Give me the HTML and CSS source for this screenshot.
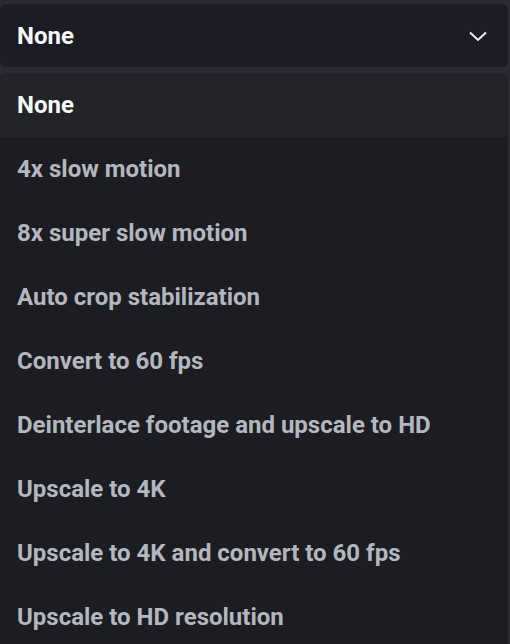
FILE: index.html
```html
<!DOCTYPE html>
<html>
<head>
<meta charset="utf-8">
<link rel="stylesheet" href="styles.css">
</head>
<body>
<div class="wrap">
  <div class="select">
    <span class="value">None</span>
    <svg class="chev" width="18" height="12" viewBox="0 0 18 12"><path d="M1 2.5 L9 10 L17 2.5" fill="none" stroke="#eceef1" stroke-width="2"/></svg>
  </div>
  <ul class="menu">
    <li class="item active">None</li>
    <li class="item">4x slow motion</li>
    <li class="item">8x super slow motion</li>
    <li class="item">Auto crop stabilization</li>
    <li class="item">Convert to 60 fps</li>
    <li class="item">Deinterlace footage and upscale to HD</li>
    <li class="item">Upscale to 4K</li>
    <li class="item">Upscale to 4K and convert to 60 fps</li>
    <li class="item">Upscale to HD resolution</li>
  </ul>
</div>
</body>
</html>
```
FILE: styles.css
```css
html, body {
  margin: 0;
  padding: 0;
  background: #2a2b30;
  height: 100%;
  overflow: hidden;
}
.wrap {
  height: 100vh;
  box-sizing: border-box;
  padding: 4px 2px 0 0;
  display: flex;
  flex-direction: column;
  gap: 6px;
  font-family: Roboto, "Liberation Sans", sans-serif;
  font-weight: 700;
  font-size: 24px;
}
.select {
  flex: none;
  height: 63px;
  background: #1c1d24;
  border-radius: 6px;
  display: flex;
  align-items: center;
  justify-content: space-between;
  padding: 0 21px 0 17px;
  box-sizing: border-box;
  color: #f6f8fb;
}
.chev {
  display: block;
}
.menu {
  flex: 1;
  min-height: 0;
  overflow: hidden;
  list-style: none;
  margin: 0;
  padding: 0;
  background: #1c1d23;
  border-radius: 6px 6px 0 0;
}
.item {
  height: 64px;
  display: flex;
  align-items: center;
  padding: 0 17px;
  color: #b4b7bd;
}
.item.active {
  background: #22242a;
  color: #f6f8fb;
  border-radius: 6px 6px 0 0;
}
```
